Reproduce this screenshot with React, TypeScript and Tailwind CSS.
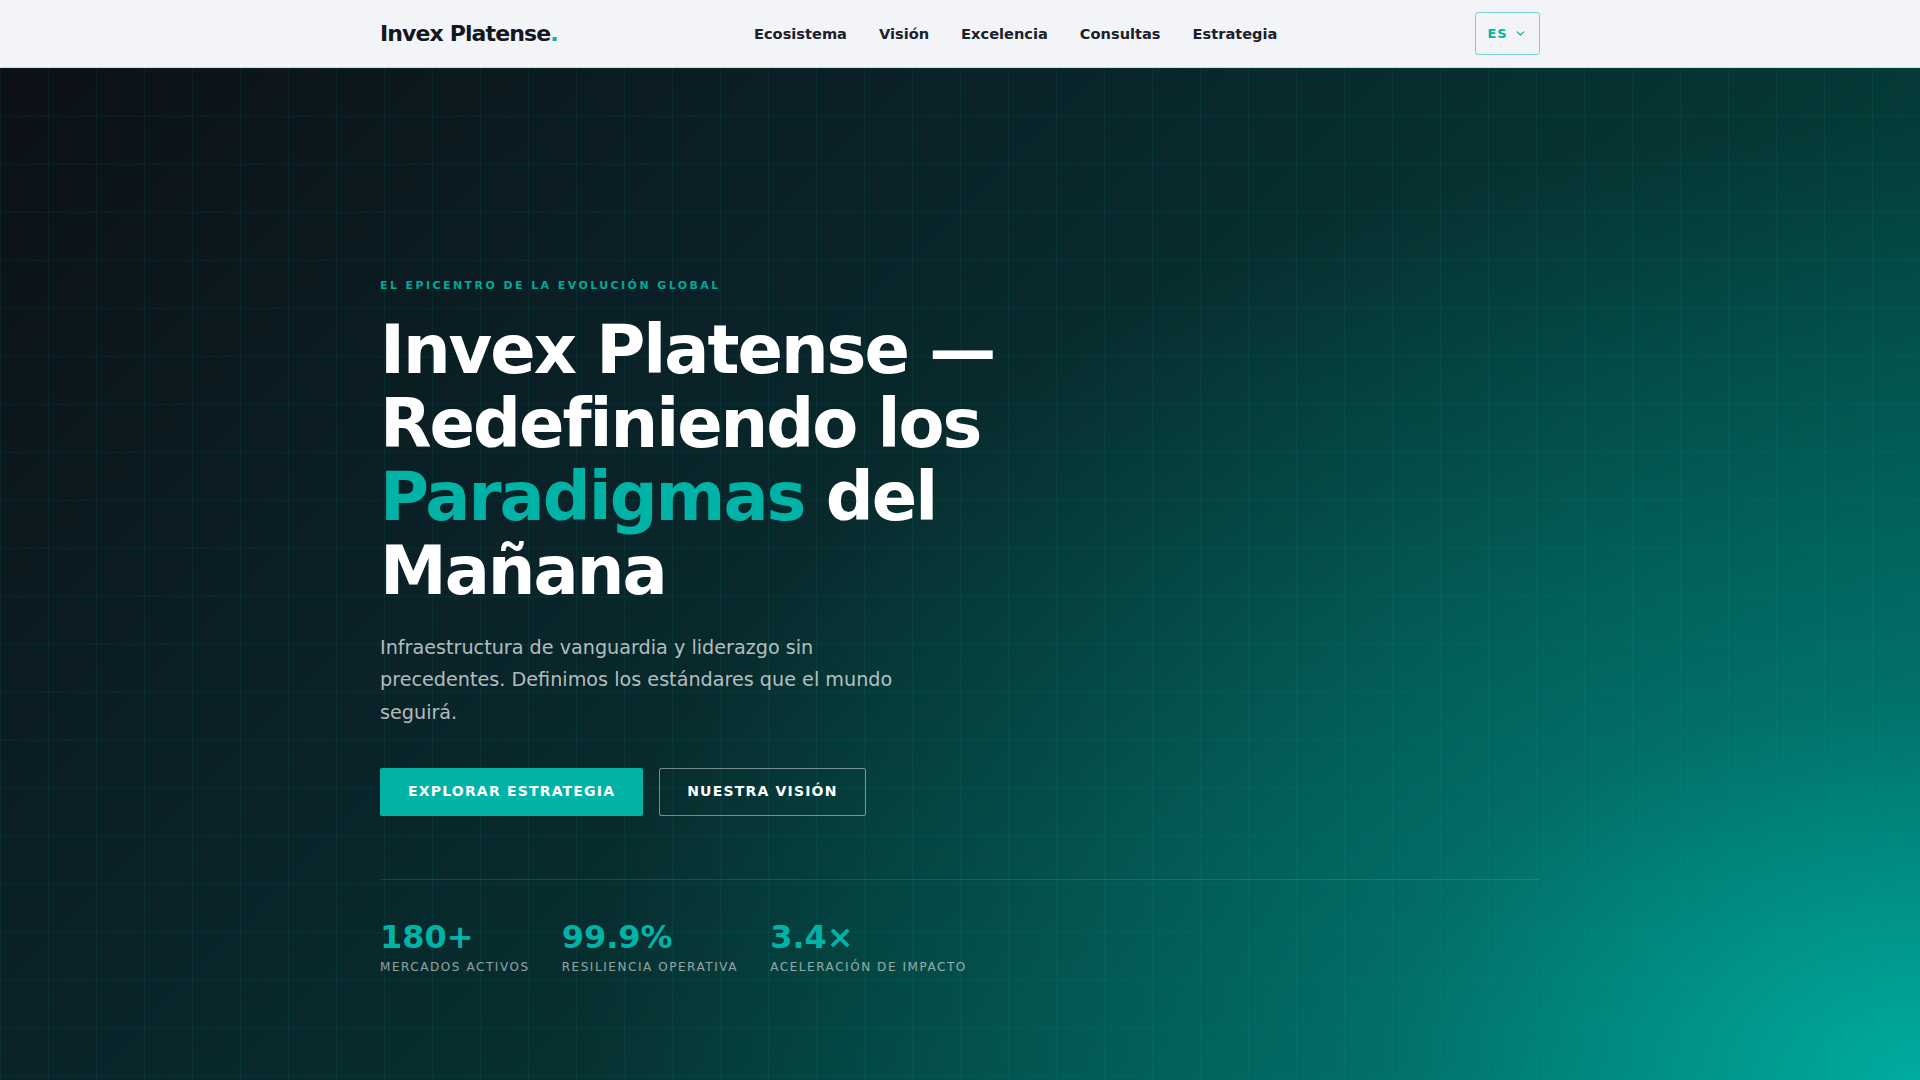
import { ChevronDown } from "lucide-react";

const navItems = ["Ecosistema", "Visión", "Excelencia", "Consultas", "Estrategia"];

const stats = [
  { value: "180+", label: "MERCADOS ACTIVOS" },
  { value: "99.9%", label: "RESILIENCIA OPERATIVA" },
  { value: "3.4×", label: "ACELERACIÓN DE IMPACTO" },
];

export default function App() {
  return (
    <div className="min-h-screen w-full bg-[#0d1117] font-['DejaVu_Sans',sans-serif]">
      <header className="h-[68px] border-b border-[#d6dae0] bg-[#f3f4f8]">
        <div className="mx-auto flex h-full max-w-[1160px] items-center">
          <div className="w-[374px] shrink-0 text-[22px] font-bold tracking-[-0.04em] text-[#121720]">
            Invex Platense<span className="text-[#00b3a6]">.</span>
          </div>
          <nav className="flex items-center gap-8 text-[14.6px] font-bold text-[#1b202b]">
            {navItems.map((n) => (
              <a key={n} href="#" className="leading-5">
                {n}
              </a>
            ))}
          </nav>
          <button className="ml-auto flex h-[43px] w-[65px] items-center justify-center gap-[7px] rounded-[3px] border border-[#00b3a6]/50 text-[13px] font-bold tracking-[0.06em] text-[#00b3a6]">
            <span>ES</span>
            <ChevronDown size={13} strokeWidth={2.2} />
          </button>
        </div>
      </header>

      <section className="relative h-[1012px] overflow-hidden bg-[radial-gradient(70%_95%_at_100%_100%,rgba(0,176,164,0.95)_0%,rgba(0,150,140,0.5)_40%,rgba(0,120,110,0)_100%),linear-gradient(135deg,#0c1016_0%,#0a2329_35%,#053533_60%,#00564f_100%)]">
        <div className="pointer-events-none absolute inset-0 bg-[linear-gradient(rgba(0,190,176,0.08)_1px,transparent_1px),linear-gradient(90deg,rgba(0,190,176,0.08)_1px,transparent_1px)] bg-[size:48px_48px]" />
        <div className="relative mx-auto max-w-[1160px] pt-[210px]">
          <p className="mb-[20px] text-[11px] font-bold leading-4 tracking-[0.22em] text-[#00a99d]">
            EL EPICENTRO DE LA EVOLUCIÓN GLOBAL
          </p>
          <h1 className="max-w-[760px] text-[67px] font-bold leading-[1.1] tracking-[-0.03em] text-white">
            Invex Platense —<br />
            Redefiniendo los
            <br />
            <span className="text-[#00b3a6]">Paradigmas</span> del
            <br />
            Mañana
          </h1>
          <p className="mt-[23px] max-w-[540px] text-[19.2px] leading-[1.7] text-white/70">
            Infraestructura de vanguardia y liderazgo sin precedentes. Definimos los estándares que el mundo seguirá.
          </p>
          <div className="mt-[38px] flex gap-4">
            <button className="h-12 rounded-[2px] bg-[#00b3a6] px-7 text-[14px] font-bold tracking-[0.085em] text-white">
              EXPLORAR ESTRATEGIA
            </button>
            <button className="h-12 rounded-[2px] border border-white/45 px-[27px] text-[14px] font-bold tracking-[0.085em] text-white">
              NUESTRA VISIÓN
            </button>
          </div>
          <div className="mt-[63px] border-t border-white/10 pt-[41px]">
            <div className="flex gap-8">
              {stats.map((s) => (
                <div key={s.label} className="flex flex-col">
                  <span className="text-[32px] font-bold leading-8 text-[#00b3a6]">{s.value}</span>
                  <span className="mt-[6px] text-[12px] leading-4 tracking-[0.13em] text-white/55">{s.label}</span>
                </div>
              ))}
            </div>
          </div>
        </div>
      </section>
    </div>
  );
}
